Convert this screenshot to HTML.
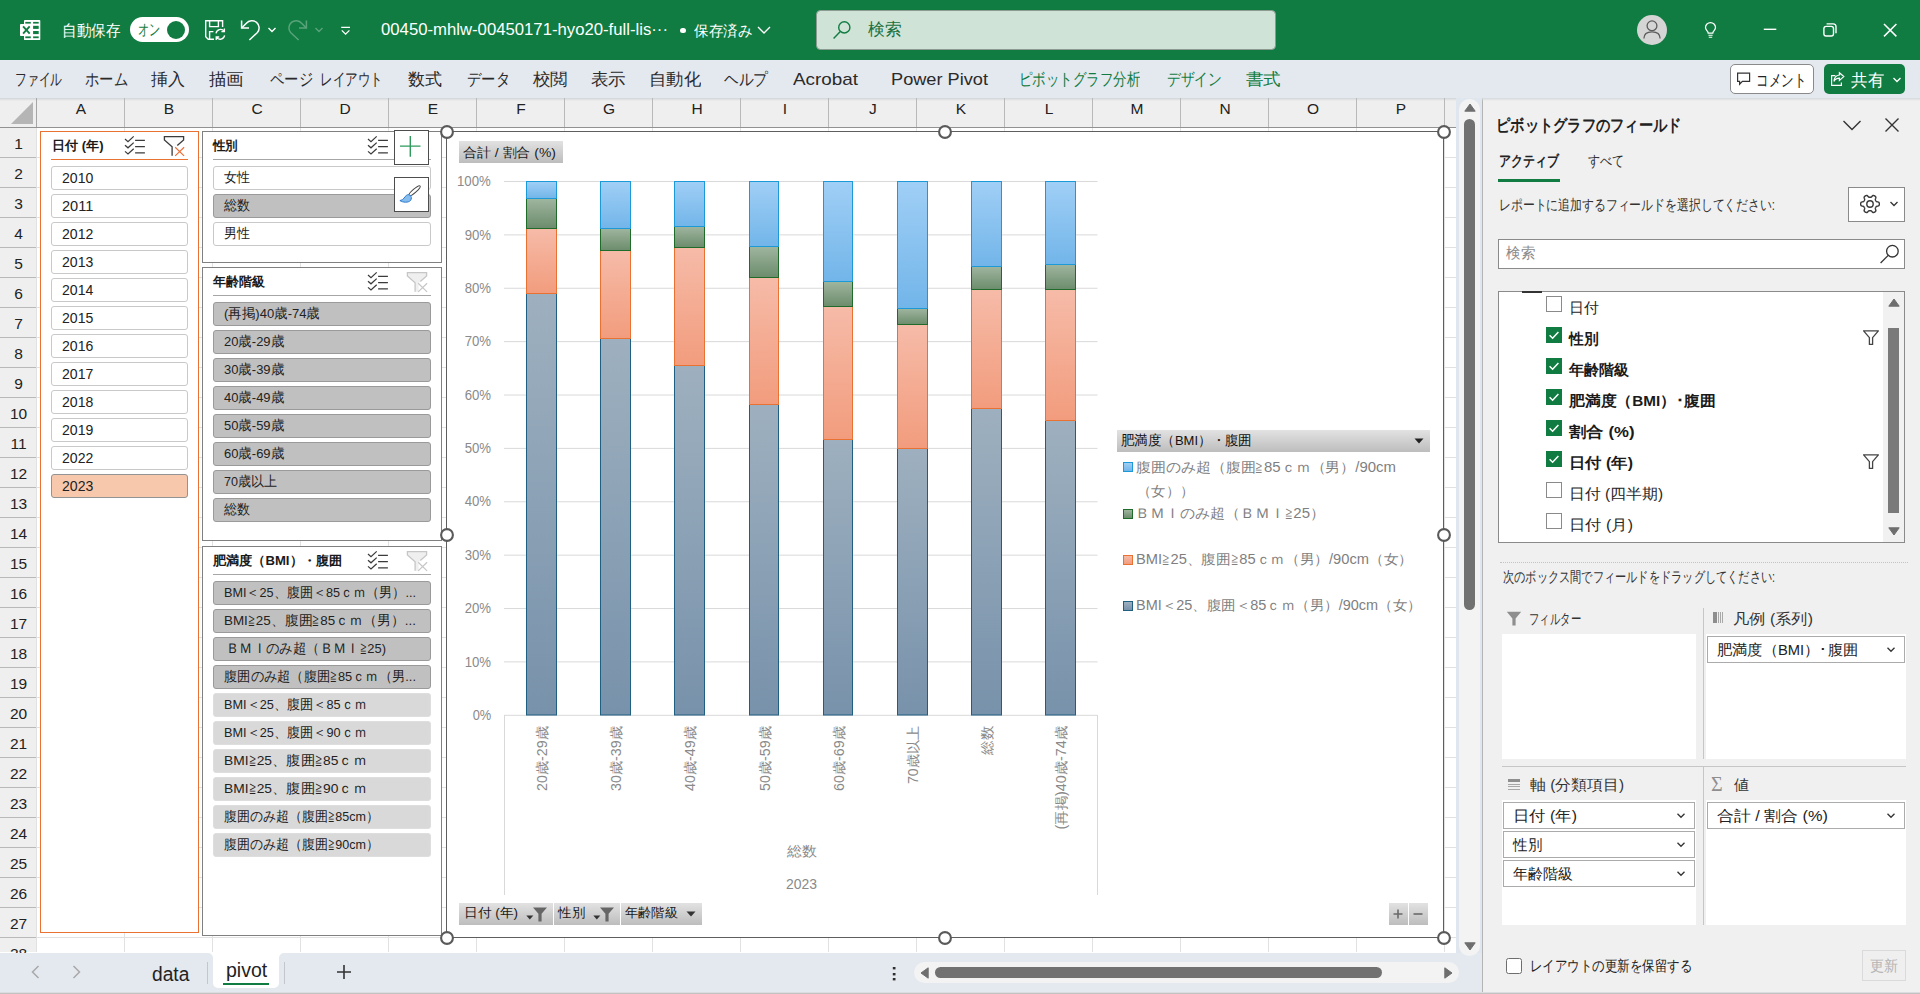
<!DOCTYPE html><html lang="ja"><head><meta charset="utf-8"><title>Excel</title><style>
*{box-sizing:border-box;margin:0;padding:0}
html,body{width:1920px;height:994px;overflow:hidden;background:#fff}
body{font-family:"Liberation Sans",sans-serif;font-size:14px;color:#222;position:relative}
div,svg{position:absolute}
.t{white-space:nowrap;line-height:1}
.ch{top:98px;height:29px;width:88px;border-right:1px solid #b9b9b9}
.rh{left:0;width:36px;height:30px;border-bottom:1px solid #b9b9b9}
.vg{top:128px;width:1px;height:824px;background:#e1e1e1}
.hg{left:37px;height:1px;width:1420px;background:#e1e1e1}
.slicer{background:#fff;border:1px solid #808080}
.ul{height:1px;background:#a6a6a6}
.si{height:24px;border:1px solid #c9c9c9;border-radius:3px;background:#fff}
.si.sel{background:#c0c0c0;border-color:#9a9a9a}
.si.dim{background:#d9d9d9;border-color:#dedede}
.si.or{background:#f7c8ac;border-color:#939393}
.fb{background:linear-gradient(#e2e2e2,#bdbdbd);}
.hdl{width:12px;height:12px;border-radius:50%;background:#fff;border:2px solid #595959}
.wbox{background:#fff}
.dd{background:#fff;border:1px solid #ababab;height:26px}
.cb{width:15px;height:15px;border:1px solid #8a8a8a;background:#fff}
.cbk{width:15px;height:15px;background:#107c41}
</style></head><body>
<div style="left:0;top:0;width:1920px;height:60px;background:#107c41"></div>
<svg style="left:18px;top:18px" width="24" height="24" viewBox="18 18 24 24"><rect x="24" y="19.9" width="16.3" height="20.2" rx="0.9" fill="#fff"/>
<g fill="#107c41"><rect x="33.1" y="21.9" width="5.6" height="1.7"/><rect x="33.1" y="25.8" width="5.6" height="3.1"/><rect x="33.1" y="31" width="5.6" height="3.1"/><rect x="33.1" y="36.4" width="5.6" height="1.8"/><rect x="25.3" y="21.9" width="5.5" height="1.7"/><rect x="25.3" y="36.4" width="5.5" height="1.8"/></g>
<rect x="20" y="24" width="11.6" height="12" rx="0.8" fill="#fff"/><path d="M23.1 26.3L29.7 33.7M29.7 26.3L23.1 33.7" stroke="#107c41" stroke-width="1.9"/></svg>
<div class="t" style="font-size:16px;color:#fff;left:62.30px;top:23.20px;transform:scaleX(0.9141);transform-origin:left center;">自動保存</div>
<div style="left:130px;top:17px;width:59px;height:25px;border-radius:12.5px;background:#fff"></div>
<div style="left:167px;top:21px;width:18px;height:18px;border-radius:50%;background:#107c41"></div>
<div class="t" style="font-size:15.5px;color:#107c41;left:137.60px;top:22.25px;transform:scaleX(0.6969);transform-origin:left center;">オン</div>
<svg style="left:204px;top:18px" width="24" height="24" viewBox="0 0 24 24" fill="none" stroke="#fff" stroke-width="1.4">
<path d="M10 21.3H4.2L1.7 18.8V2.7H18.6V9"/><path d="M5.6 2.7V8.6H14.4V2.7"/><path d="M5.6 21V13.6H9.4"/>
<path d="M12 15.3A4.6 4.6 0 0 1 20.2 13.2M20.4 10.6V13.6H17.4M20.6 17.3A4.6 4.6 0 0 1 12.4 19.4M12.2 22V19H15.2" stroke-width="1.3"/></svg>
<svg style="left:239px;top:18px" width="24" height="24" viewBox="0 0 24 24" fill="none" stroke="#fff" stroke-width="1.5">
<path d="M2.6 2.6V10H10"/><path d="M2.9 9.7L7.4 5.2A7.2 7.2 0 0 1 18.4 14.5L10.4 22"/></svg>
<svg style="left:266.6px;top:25.6px" width="10" height="8" viewBox="0 0 10 8" fill="none" stroke="#fff" stroke-width="1.4"><path d="M1.5 2L5 5.5L8.5 2"/></svg>
<svg style="left:285.4px;top:18px" width="24" height="24" viewBox="0 0 24 24" fill="none" stroke="#59a37c" stroke-width="1.5">
<path d="M21.4 2.6V10H14"/><path d="M21.1 9.7L16.6 5.2A7.2 7.2 0 0 0 5.6 14.5L13.6 22"/></svg>
<svg style="left:314.3px;top:25.6px" width="10" height="8" viewBox="0 0 10 8" fill="none" stroke="#59a37c" stroke-width="1.4"><path d="M1.5 2L5 5.5L8.5 2"/></svg>
<svg style="left:339px;top:24px" width="14" height="12" viewBox="0 0 14 12" fill="none" stroke="#fff" stroke-width="1.3"><path d="M2.2 3.3H11M2.8 6.4L6.6 10.2L10.4 6.4"/></svg>
<div class="t" style="font-size:16px;color:#fff;left:381.00px;top:22.00px;transform:scaleX(1.0444);transform-origin:left center;">00450-mhlw-00450171-hyo20-full-lis···</div>
<div style="left:680.3px;top:27.8px;width:5.4px;height:5.4px;border-radius:50%;background:#fff"></div>
<div class="t" style="font-size:15px;color:#fff;left:694.00px;top:22.50px;transform:scaleX(0.9667);transform-origin:left center;">保存済み</div>
<svg style="left:756px;top:25px" width="16" height="10" viewBox="0 0 16 10" fill="none" stroke="#fff" stroke-width="1.4"><path d="M2 2L8 8L14 2"/></svg>
<div style="left:816px;top:10px;width:460px;height:40px;background:#cfe3d7;border:1px solid #8c9a92;border-radius:4.5px"></div>
<svg style="left:832px;top:20px" width="20" height="20" viewBox="0 0 20 20" fill="none" stroke="#107c41" stroke-width="1.4"><circle cx="12.3" cy="7.4" r="5.6"/><path d="M8.3 11.4L1.6 18.4"/></svg>
<div class="t" style="font-size:16.5px;color:#17703e;left:868.00px;top:21.35px;transform:scaleX(0.9853);transform-origin:left center;">検索</div>
<div style="left:1637px;top:15px;width:30px;height:30px;border-radius:50%;background:#d5d5d5"></div>
<svg style="left:1641px;top:19px" width="22" height="22" viewBox="0 0 22 22" fill="none" stroke="#5c5c5c" stroke-width="1.3"><circle cx="11" cy="6.8" r="4.9"/><path d="M2.9 19.6C2.9 14.4 6.6 12.9 11 12.9S19.1 14.4 19.1 19.6"/></svg>
<svg style="left:1702px;top:21px" width="18" height="19" viewBox="0 0 18 19" fill="none" stroke="#fff" stroke-width="1.25"><path d="M6.2 12.2C6.2 9.9 3.5 9.2 3.5 6.6A5 5 0 0 1 13.5 6.6C13.5 9.2 10.8 9.9 10.8 12.2Z"/><path d="M6.4 14.2H10.6M6.8 16.2H10.2" stroke-width="1.1"/></svg>
<svg style="left:1762px;top:26px" width="16" height="6"><path d="M1.8 3.3H14.3" stroke="#fff" stroke-width="1.4"/></svg>
<svg style="left:1821px;top:21px" width="18" height="18" viewBox="0 0 18 18" fill="none" stroke="#fff" stroke-width="1.4"><rect x="2.9" y="5.4" width="9.6" height="9.6" rx="2.2"/><path d="M5.6 2.9H12.2A2.8 2.8 0 0 1 15 5.7V12.3"/></svg>
<svg style="left:1882px;top:22px" width="16" height="16" viewBox="0 0 16 16" fill="none" stroke="#fff" stroke-width="1.5"><path d="M2 2L14.4 14.4M14.4 2L2 14.4"/></svg>
<div style="left:0;top:60px;width:1920px;height:38px;background:#e4e8ef"></div>
<div class="t" style="font-size:17px;color:#2a2a2a;left:14.80px;top:70.80px;transform:scaleX(0.6912);transform-origin:left center;">ファイル</div>
<div class="t" style="font-size:17px;color:#2a2a2a;left:84.80px;top:70.80px;transform:scaleX(0.8431);transform-origin:left center;">ホーム</div>
<div class="t" style="font-size:17px;color:#2a2a2a;left:150.80px;top:70.80px;">挿入</div>
<div class="t" style="font-size:17px;color:#2a2a2a;left:208.80px;top:70.80px;transform:scaleX(1.0294);transform-origin:left center;">描画</div>
<div class="t" style="font-size:17px;color:#2a2a2a;left:269.80px;top:70.80px;transform:scaleX(0.8431);transform-origin:left center;">ページ</div>
<div class="t" style="font-size:17px;color:#2a2a2a;left:319.80px;top:70.80px;transform:scaleX(0.7353);transform-origin:left center;">レイアウト</div>
<div class="t" style="font-size:17px;color:#2a2a2a;left:407.80px;top:70.80px;">数式</div>
<div class="t" style="font-size:17px;color:#2a2a2a;left:466.80px;top:70.80px;transform:scaleX(0.8431);transform-origin:left center;">データ</div>
<div class="t" style="font-size:17px;color:#2a2a2a;left:532.80px;top:70.80px;transform:scaleX(1.0294);transform-origin:left center;">校閲</div>
<div class="t" style="font-size:17px;color:#2a2a2a;left:590.80px;top:70.80px;transform:scaleX(1.0294);transform-origin:left center;">表示</div>
<div class="t" style="font-size:17px;color:#2a2a2a;left:648.80px;top:70.80px;transform:scaleX(1.0196);transform-origin:left center;">自動化</div>
<div class="t" style="font-size:17px;color:#2a2a2a;left:723.80px;top:70.80px;transform:scaleX(0.8627);transform-origin:left center;">ヘルプ</div>
<div class="t" style="font-size:17px;color:#2a2a2a;left:793.00px;top:70.80px;transform:scaleX(1.1093);transform-origin:left center;">Acrobat</div>
<div class="t" style="font-size:17px;color:#2a2a2a;left:891.00px;top:70.80px;transform:scaleX(1.0694);transform-origin:left center;">Power Pivot</div>
<div class="t" style="font-size:17px;color:#107c41;left:1018.80px;top:70.80px;transform:scaleX(0.7908);transform-origin:left center;">ピボットグラフ分析</div>
<div class="t" style="font-size:17px;color:#107c41;left:1166.80px;top:70.80px;transform:scaleX(0.8088);transform-origin:left center;">デザイン</div>
<div class="t" style="font-size:17px;color:#107c41;left:1245.80px;top:70.80px;transform:scaleX(1.0294);transform-origin:left center;">書式</div>
<div style="left:1730px;top:64px;width:84px;height:30px;background:#fff;border:1px solid #8a8a8a;border-radius:5px"></div>
<svg style="left:1735.6px;top:70.8px" width="16" height="16" viewBox="0 0 16 16" fill="none" stroke="#333" stroke-width="1.2"><path d="M1.6 2.2H13.6V10.4H6.4L3.6 13.2V10.4H1.6Z"/></svg>
<div class="t" style="font-size:17px;color:#222;left:1755.50px;top:71.70px;transform:scaleX(0.7353);transform-origin:left center;">コメント</div>
<div style="left:1824px;top:64px;width:81px;height:30px;background:#107c41;border-radius:5px"></div>
<svg style="left:1828.6px;top:70.6px" width="17" height="17" viewBox="0 0 17 17" fill="none" stroke="#fff" stroke-width="1.2"><path d="M6.4 4.6H2.6V14.4H12.4V11.4"/><path d="M10.4 1.8L14.8 5.6L10.4 9.4V7.2C7.6 7.2 6 8.4 5 10.4C5.2 6.8 7 4.4 10.4 4V1.8Z"/></svg>
<div class="t" style="font-size:17px;color:#fff;left:1850.50px;top:71.50px;transform:scaleX(0.9706);transform-origin:left center;">共有</div>
<svg style="left:1891.6px;top:76px" width="10" height="8" viewBox="0 0 10 8" fill="none" stroke="#fff" stroke-width="1.3"><path d="M1.5 2L5 5.5L8.5 2"/></svg>
<div style="left:0;top:98px;width:1457px;height:30px;background:#efefef;border-bottom:1px solid #929292"></div>
<div style="left:0;top:98px;width:1920px;height:3px;background:linear-gradient(#d2d4d8,rgba(226,226,226,0))"></div>
<div style="left:0;top:128px;width:37px;height:824px;background:#efefef;border-right:1px solid #a6a6a6"></div>
<div class="vg" style="left:36px"></div>
<div class="vg" style="left:124px"></div>
<div class="vg" style="left:212px"></div>
<div class="vg" style="left:300px"></div>
<div class="vg" style="left:388px"></div>
<div class="vg" style="left:476px"></div>
<div class="vg" style="left:564px"></div>
<div class="vg" style="left:652px"></div>
<div class="vg" style="left:740px"></div>
<div class="vg" style="left:828px"></div>
<div class="vg" style="left:916px"></div>
<div class="vg" style="left:1004px"></div>
<div class="vg" style="left:1092px"></div>
<div class="vg" style="left:1180px"></div>
<div class="vg" style="left:1268px"></div>
<div class="vg" style="left:1356px"></div>
<div class="vg" style="left:1444px"></div>
<div class="hg" style="top:157px"></div>
<div class="hg" style="top:187px"></div>
<div class="hg" style="top:217px"></div>
<div class="hg" style="top:247px"></div>
<div class="hg" style="top:277px"></div>
<div class="hg" style="top:307px"></div>
<div class="hg" style="top:337px"></div>
<div class="hg" style="top:367px"></div>
<div class="hg" style="top:397px"></div>
<div class="hg" style="top:427px"></div>
<div class="hg" style="top:457px"></div>
<div class="hg" style="top:487px"></div>
<div class="hg" style="top:517px"></div>
<div class="hg" style="top:547px"></div>
<div class="hg" style="top:577px"></div>
<div class="hg" style="top:607px"></div>
<div class="hg" style="top:637px"></div>
<div class="hg" style="top:667px"></div>
<div class="hg" style="top:697px"></div>
<div class="hg" style="top:727px"></div>
<div class="hg" style="top:757px"></div>
<div class="hg" style="top:787px"></div>
<div class="hg" style="top:817px"></div>
<div class="hg" style="top:847px"></div>
<div class="hg" style="top:877px"></div>
<div class="hg" style="top:907px"></div>
<div class="hg" style="top:937px"></div>
<div class="hg" style="top:967px"></div>
<div class="ch" style="left:37px"></div>
<div class="t" style="font-size:15.5px;color:#222;left:75.83px;top:101.25px;">A</div>
<div class="ch" style="left:125px"></div>
<div class="t" style="font-size:15.5px;color:#222;left:163.83px;top:101.25px;">B</div>
<div class="ch" style="left:213px"></div>
<div class="t" style="font-size:15.5px;color:#222;left:251.40px;top:101.25px;">C</div>
<div class="ch" style="left:301px"></div>
<div class="t" style="font-size:15.5px;color:#222;left:339.40px;top:101.25px;">D</div>
<div class="ch" style="left:389px"></div>
<div class="t" style="font-size:15.5px;color:#222;left:427.83px;top:101.25px;">E</div>
<div class="ch" style="left:477px"></div>
<div class="t" style="font-size:15.5px;color:#222;left:516.27px;top:101.25px;">F</div>
<div class="ch" style="left:565px"></div>
<div class="t" style="font-size:15.5px;color:#222;left:602.97px;top:101.25px;">G</div>
<div class="ch" style="left:653px"></div>
<div class="t" style="font-size:15.5px;color:#222;left:691.40px;top:101.25px;">H</div>
<div class="ch" style="left:741px"></div>
<div class="t" style="font-size:15.5px;color:#222;left:782.84px;top:101.25px;">I</div>
<div class="ch" style="left:829px"></div>
<div class="t" style="font-size:15.5px;color:#222;left:869.12px;top:101.25px;">J</div>
<div class="ch" style="left:917px"></div>
<div class="t" style="font-size:15.5px;color:#222;left:955.83px;top:101.25px;">K</div>
<div class="ch" style="left:1005px"></div>
<div class="t" style="font-size:15.5px;color:#222;left:1044.69px;top:101.25px;">L</div>
<div class="ch" style="left:1093px"></div>
<div class="t" style="font-size:15.5px;color:#222;left:1130.54px;top:101.25px;">M</div>
<div class="ch" style="left:1181px"></div>
<div class="t" style="font-size:15.5px;color:#222;left:1219.40px;top:101.25px;">N</div>
<div class="ch" style="left:1269px"></div>
<div class="t" style="font-size:15.5px;color:#222;left:1306.97px;top:101.25px;">O</div>
<div class="ch" style="left:1357px"></div>
<div class="t" style="font-size:15.5px;color:#222;left:1395.83px;top:101.25px;">P</div>
<div style="left:0;top:98px;width:37px;height:29px;border-right:1px solid #a6a6a6"></div>
<svg style="left:11px;top:102px" width="23" height="23"><path d="M22 0V22H0Z" fill="#b5b5b5"/></svg>
<div class="rh" style="top:128px"></div>
<div class="t" style="font-size:15.5px;color:#222;left:14.29px;top:135.55px;">1</div>
<div class="rh" style="top:158px"></div>
<div class="t" style="font-size:15.5px;color:#222;left:14.29px;top:165.55px;">2</div>
<div class="rh" style="top:188px"></div>
<div class="t" style="font-size:15.5px;color:#222;left:14.29px;top:195.55px;">3</div>
<div class="rh" style="top:218px"></div>
<div class="t" style="font-size:15.5px;color:#222;left:14.29px;top:225.55px;">4</div>
<div class="rh" style="top:248px"></div>
<div class="t" style="font-size:15.5px;color:#222;left:14.29px;top:255.55px;">5</div>
<div class="rh" style="top:278px"></div>
<div class="t" style="font-size:15.5px;color:#222;left:14.29px;top:285.55px;">6</div>
<div class="rh" style="top:308px"></div>
<div class="t" style="font-size:15.5px;color:#222;left:14.29px;top:315.55px;">7</div>
<div class="rh" style="top:338px"></div>
<div class="t" style="font-size:15.5px;color:#222;left:14.29px;top:345.55px;">8</div>
<div class="rh" style="top:368px"></div>
<div class="t" style="font-size:15.5px;color:#222;left:14.29px;top:375.55px;">9</div>
<div class="rh" style="top:398px"></div>
<div class="t" style="font-size:15.5px;color:#222;left:9.98px;top:405.55px;">10</div>
<div class="rh" style="top:428px"></div>
<div class="t" style="font-size:15.5px;color:#222;left:10.55px;top:435.55px;">11</div>
<div class="rh" style="top:458px"></div>
<div class="t" style="font-size:15.5px;color:#222;left:9.98px;top:465.55px;">12</div>
<div class="rh" style="top:488px"></div>
<div class="t" style="font-size:15.5px;color:#222;left:9.98px;top:495.55px;">13</div>
<div class="rh" style="top:518px"></div>
<div class="t" style="font-size:15.5px;color:#222;left:9.98px;top:525.55px;">14</div>
<div class="rh" style="top:548px"></div>
<div class="t" style="font-size:15.5px;color:#222;left:9.98px;top:555.55px;">15</div>
<div class="rh" style="top:578px"></div>
<div class="t" style="font-size:15.5px;color:#222;left:9.98px;top:585.55px;">16</div>
<div class="rh" style="top:608px"></div>
<div class="t" style="font-size:15.5px;color:#222;left:9.98px;top:615.55px;">17</div>
<div class="rh" style="top:638px"></div>
<div class="t" style="font-size:15.5px;color:#222;left:9.98px;top:645.55px;">18</div>
<div class="rh" style="top:668px"></div>
<div class="t" style="font-size:15.5px;color:#222;left:9.98px;top:675.55px;">19</div>
<div class="rh" style="top:698px"></div>
<div class="t" style="font-size:15.5px;color:#222;left:9.98px;top:705.55px;">20</div>
<div class="rh" style="top:728px"></div>
<div class="t" style="font-size:15.5px;color:#222;left:9.98px;top:735.55px;">21</div>
<div class="rh" style="top:758px"></div>
<div class="t" style="font-size:15.5px;color:#222;left:9.98px;top:765.55px;">22</div>
<div class="rh" style="top:788px"></div>
<div class="t" style="font-size:15.5px;color:#222;left:9.98px;top:795.55px;">23</div>
<div class="rh" style="top:818px"></div>
<div class="t" style="font-size:15.5px;color:#222;left:9.98px;top:825.55px;">24</div>
<div class="rh" style="top:848px"></div>
<div class="t" style="font-size:15.5px;color:#222;left:9.98px;top:855.55px;">25</div>
<div class="rh" style="top:878px"></div>
<div class="t" style="font-size:15.5px;color:#222;left:9.98px;top:885.55px;">26</div>
<div class="rh" style="top:908px"></div>
<div class="t" style="font-size:15.5px;color:#222;left:9.98px;top:915.55px;">27</div>
<div class="rh" style="top:938px"></div>
<div class="t" style="font-size:15.5px;color:#222;left:9.98px;top:945.55px;">28</div>
<div class="slicer" style="left:40px;top:131px;width:159px;height:802px;border-color:#e97132"></div>
<div class="t" style="font-size:13px;color:#1a1a1a;font-weight:bold;left:52.00px;top:138.70px;transform:scaleX(1.0043);transform-origin:left center;">日付 (年)</div>
<svg style="left:124px;top:135px" width="22" height="21" viewBox="0 0 22 21" fill="none" stroke="#3b3b3b" stroke-width="1.25"><path d="M1 4L4 6.6L9.7 1.4M1 10.2L4 12.8L9.7 7.6M1 16.4L4 19L9.7 13.8"/><path d="M11.1 5.3H20.9M11.1 11.6H20.9M11.1 17.8H20.9" stroke-width="1.3"/></svg>
<svg style="left:162px;top:135px" width="24" height="22" viewBox="0 0 24 22" fill="none" stroke="#3b3b3b" stroke-width="1.3"><path d="M10.1 20.7V11.75L2.4 4.95V1.7H21.6V4.95L15.3 10.6L13.6 12.2V20.7" fill="#fbfbfb" stroke="none"/><path d="M10.1 20.7V11.75L2.4 4.95V1.7H21.6V4.95L15.3 10.6"/><path d="M13.2 12.2L22.1 20.9M22.1 12.2L13.2 20.9" stroke="#e8703a" stroke-width="1.2"/></svg>
<div class="ul" style="left:51px;top:159px;width:137px;background:#e97132"></div>
<div class="si" style="left:51px;top:166px;width:137px"></div>
<div class="t" style="font-size:14px;color:#222;left:62.30px;top:170.60px;transform:scaleX(1.0046);transform-origin:left center;">2010</div>
<div class="si" style="left:51px;top:194px;width:137px"></div>
<div class="t" style="font-size:14px;color:#222;left:62.30px;top:198.60px;transform:scaleX(1.0395);transform-origin:left center;">2011</div>
<div class="si" style="left:51px;top:222px;width:137px"></div>
<div class="t" style="font-size:14px;color:#222;left:62.30px;top:226.60px;transform:scaleX(1.0046);transform-origin:left center;">2012</div>
<div class="si" style="left:51px;top:250px;width:137px"></div>
<div class="t" style="font-size:14px;color:#222;left:62.30px;top:254.60px;transform:scaleX(1.0046);transform-origin:left center;">2013</div>
<div class="si" style="left:51px;top:278px;width:137px"></div>
<div class="t" style="font-size:14px;color:#222;left:62.30px;top:282.60px;transform:scaleX(1.0046);transform-origin:left center;">2014</div>
<div class="si" style="left:51px;top:306px;width:137px"></div>
<div class="t" style="font-size:14px;color:#222;left:62.30px;top:310.60px;transform:scaleX(1.0046);transform-origin:left center;">2015</div>
<div class="si" style="left:51px;top:334px;width:137px"></div>
<div class="t" style="font-size:14px;color:#222;left:62.30px;top:338.60px;transform:scaleX(1.0046);transform-origin:left center;">2016</div>
<div class="si" style="left:51px;top:362px;width:137px"></div>
<div class="t" style="font-size:14px;color:#222;left:62.30px;top:366.60px;transform:scaleX(1.0046);transform-origin:left center;">2017</div>
<div class="si" style="left:51px;top:390px;width:137px"></div>
<div class="t" style="font-size:14px;color:#222;left:62.30px;top:394.60px;transform:scaleX(1.0046);transform-origin:left center;">2018</div>
<div class="si" style="left:51px;top:418px;width:137px"></div>
<div class="t" style="font-size:14px;color:#222;left:62.30px;top:422.60px;transform:scaleX(1.0046);transform-origin:left center;">2019</div>
<div class="si" style="left:51px;top:446px;width:137px"></div>
<div class="t" style="font-size:14px;color:#222;left:62.30px;top:450.60px;transform:scaleX(1.0046);transform-origin:left center;">2022</div>
<div class="si or" style="left:51px;top:474px;width:137px"></div>
<div class="t" style="font-size:14px;color:#222;left:62.30px;top:478.60px;transform:scaleX(1.0046);transform-origin:left center;">2023</div>
<div class="slicer" style="left:202px;top:131px;width:240px;height:132px"></div>
<div class="t" style="font-size:13px;color:#1a1a1a;font-weight:bold;left:213.00px;top:138.70px;transform:scaleX(0.9615);transform-origin:left center;">性別</div>
<svg style="left:367px;top:135px" width="22" height="21" viewBox="0 0 22 21" fill="none" stroke="#3b3b3b" stroke-width="1.25"><path d="M1 4L4 6.6L9.7 1.4M1 10.2L4 12.8L9.7 7.6M1 16.4L4 19L9.7 13.8"/><path d="M11.1 5.3H20.9M11.1 11.6H20.9M11.1 17.8H20.9" stroke-width="1.3"/></svg>
<div class="ul" style="left:213px;top:159px;width:218px"></div>
<div class="si" style="left:213px;top:166px;width:218px"></div>
<div class="t" style="font-size:13.5px;color:#222;left:224.00px;top:171.25px;transform:scaleX(0.9286);transform-origin:left center;">女性</div>
<div class="si sel" style="left:213px;top:194px;width:218px"></div>
<div class="t" style="font-size:13.5px;color:#222;left:224.00px;top:199.25px;transform:scaleX(0.9286);transform-origin:left center;">総数</div>
<div class="si" style="left:213px;top:222px;width:218px"></div>
<div class="t" style="font-size:13.5px;color:#222;left:224.00px;top:227.25px;transform:scaleX(0.9286);transform-origin:left center;">男性</div>
<div class="slicer" style="left:202px;top:267px;width:240px;height:274px"></div>
<div class="t" style="font-size:13px;color:#1a1a1a;font-weight:bold;left:213.00px;top:274.70px;">年齢階級</div>
<svg style="left:367px;top:271px" width="22" height="21" viewBox="0 0 22 21" fill="none" stroke="#3b3b3b" stroke-width="1.25"><path d="M1 4L4 6.6L9.7 1.4M1 10.2L4 12.8L9.7 7.6M1 16.4L4 19L9.7 13.8"/><path d="M11.1 5.3H20.9M11.1 11.6H20.9M11.1 17.8H20.9" stroke-width="1.3"/></svg>
<svg style="left:404.6px;top:271px" width="24" height="22" viewBox="0 0 24 22" fill="none" stroke="#c6c6c6" stroke-width="1.3"><path d="M10.1 20.7V11.75L2.4 4.95V1.7H21.6V4.95L15.3 10.6L13.6 12.2V20.7" fill="#efefef" stroke="none"/><path d="M10.1 20.7V11.75L2.4 4.95V1.7H21.6V4.95L15.3 10.6"/><path d="M13.2 12.2L22.1 20.9M22.1 12.2L13.2 20.9" stroke="#c6c6c6" stroke-width="1.2"/></svg>
<div class="ul" style="left:213px;top:295px;width:218px"></div>
<div class="si sel" style="left:213px;top:302px;width:218px"></div>
<div class="t" style="font-size:13.5px;color:#222;left:224.00px;top:306.75px;transform:scaleX(0.9645);transform-origin:left center;">(再掲)40歳-74歳</div>
<div class="si sel" style="left:213px;top:330px;width:218px"></div>
<div class="t" style="font-size:13.5px;color:#222;left:224.00px;top:334.75px;transform:scaleX(0.9595);transform-origin:left center;">20歳-29歳</div>
<div class="si sel" style="left:213px;top:358px;width:218px"></div>
<div class="t" style="font-size:13.5px;color:#222;left:224.00px;top:362.75px;transform:scaleX(0.9595);transform-origin:left center;">30歳-39歳</div>
<div class="si sel" style="left:213px;top:386px;width:218px"></div>
<div class="t" style="font-size:13.5px;color:#222;left:224.00px;top:390.75px;transform:scaleX(0.9595);transform-origin:left center;">40歳-49歳</div>
<div class="si sel" style="left:213px;top:414px;width:218px"></div>
<div class="t" style="font-size:13.5px;color:#222;left:224.00px;top:418.75px;transform:scaleX(0.9595);transform-origin:left center;">50歳-59歳</div>
<div class="si sel" style="left:213px;top:442px;width:218px"></div>
<div class="t" style="font-size:13.5px;color:#222;left:224.00px;top:446.75px;transform:scaleX(0.9595);transform-origin:left center;">60歳-69歳</div>
<div class="si sel" style="left:213px;top:470px;width:218px"></div>
<div class="t" style="font-size:13.5px;color:#222;left:224.00px;top:474.75px;transform:scaleX(0.9293);transform-origin:left center;">70歳以上</div>
<div class="si sel" style="left:213px;top:498px;width:218px"></div>
<div class="t" style="font-size:13.5px;color:#222;left:224.00px;top:502.75px;transform:scaleX(0.9286);transform-origin:left center;">総数</div>
<div class="slicer" style="left:202px;top:546px;width:240px;height:390px"></div>
<div class="t" style="font-size:13px;color:#1a1a1a;font-weight:bold;left:213.00px;top:553.70px;transform:scaleX(1.0090);transform-origin:left center;">肥満度（BMI）・腹囲</div>
<svg style="left:367px;top:550px" width="22" height="21" viewBox="0 0 22 21" fill="none" stroke="#3b3b3b" stroke-width="1.25"><path d="M1 4L4 6.6L9.7 1.4M1 10.2L4 12.8L9.7 7.6M1 16.4L4 19L9.7 13.8"/><path d="M11.1 5.3H20.9M11.1 11.6H20.9M11.1 17.8H20.9" stroke-width="1.3"/></svg>
<svg style="left:404.6px;top:550px" width="24" height="22" viewBox="0 0 24 22" fill="none" stroke="#c6c6c6" stroke-width="1.3"><path d="M10.1 20.7V11.75L2.4 4.95V1.7H21.6V4.95L15.3 10.6L13.6 12.2V20.7" fill="#efefef" stroke="none"/><path d="M10.1 20.7V11.75L2.4 4.95V1.7H21.6V4.95L15.3 10.6"/><path d="M13.2 12.2L22.1 20.9M22.1 12.2L13.2 20.9" stroke="#c6c6c6" stroke-width="1.2"/></svg>
<div class="ul" style="left:213px;top:574px;width:218px"></div>
<div class="si sel" style="left:213px;top:581px;width:218px"></div>
<div class="t" style="font-size:13.5px;color:#222;left:224.00px;top:585.75px;transform:scaleX(0.9352);transform-origin:left center;">BMI＜25、腹囲＜85ｃｍ（男）...</div>
<div class="si sel" style="left:213px;top:609px;width:218px"></div>
<div class="t" style="font-size:13.5px;color:#222;left:224.00px;top:613.75px;transform:scaleX(0.9933);transform-origin:left center;">BMI≧25、腹囲≧85ｃｍ（男）...</div>
<div class="si sel" style="left:213px;top:637px;width:218px"></div>
<div class="t" style="font-size:13.5px;color:#222;left:226.00px;top:641.75px;transform:scaleX(0.9551);transform-origin:left center;">ＢＭＩのみ超（ＢＭＩ≧25)</div>
<div class="si sel" style="left:213px;top:665px;width:218px"></div>
<div class="t" style="font-size:13.5px;color:#222;left:224.00px;top:669.75px;transform:scaleX(0.9492);transform-origin:left center;">腹囲のみ超（腹囲≧85ｃｍ（男...</div>
<div class="si dim" style="left:213px;top:693px;width:218px"></div>
<div class="t" style="font-size:13.5px;color:#222;left:224.00px;top:697.75px;transform:scaleX(0.9405);transform-origin:left center;">BMI＜25、腹囲＜85ｃｍ</div>
<div class="si dim" style="left:213px;top:721px;width:218px"></div>
<div class="t" style="font-size:13.5px;color:#222;left:224.00px;top:725.75px;transform:scaleX(0.9405);transform-origin:left center;">BMI＜25、腹囲＜90ｃｍ</div>
<div class="si dim" style="left:213px;top:749px;width:218px"></div>
<div class="t" style="font-size:13.5px;color:#222;left:224.00px;top:753.75px;transform:scaleX(1.0211);transform-origin:left center;">BMI≧25、腹囲≧85ｃｍ</div>
<div class="si dim" style="left:213px;top:777px;width:218px"></div>
<div class="t" style="font-size:13.5px;color:#222;left:224.00px;top:781.75px;transform:scaleX(1.0211);transform-origin:left center;">BMI≧25、腹囲≧90ｃｍ</div>
<div class="si dim" style="left:213px;top:805px;width:218px"></div>
<div class="t" style="font-size:13.5px;color:#222;left:224.00px;top:809.75px;transform:scaleX(0.9281);transform-origin:left center;">腹囲のみ超（腹囲≧85cm）</div>
<div class="si dim" style="left:213px;top:833px;width:218px"></div>
<div class="t" style="font-size:13.5px;color:#222;left:224.00px;top:837.75px;transform:scaleX(0.9281);transform-origin:left center;">腹囲のみ超（腹囲≧90cm）</div>
<div style="left:394px;top:130px;width:35px;height:35px;background:#fff;border:1px solid #4d4d4d"></div>
<svg style="left:394px;top:130px" width="35" height="35" fill="none" stroke="#2f9a5c" stroke-width="1.4"><path d="M16.3 6V26.8M6 16.1H26.5"/></svg>
<div style="left:394px;top:177px;width:35px;height:35px;background:#fff;border:1px solid #4d4d4d"></div>
<svg style="left:394px;top:177px" width="35" height="35" viewBox="0 0 35 35"><ellipse cx="20.6" cy="13.8" rx="7.3" ry="1.75" transform="rotate(-41 20.6 13.8)" fill="#fff" stroke="#444" stroke-width="1"/><path d="M15.8 18C17.5 19.5 18 21.5 16.5 23.5C14 26 9 25.5 5.9 23.6C10 23 10.5 19.5 12.5 18.3C13.5 17.6 15 17.4 15.8 18Z" fill="#86bdee" stroke="#2b7bd0" stroke-width="1"/></svg>
<div style="left:446px;top:131px;width:998px;height:807px;background:#fff;border:1px solid #5e5e5e"></div>
<div class="fb" style="left:459px;top:141px;width:104px;height:22px"></div>
<div class="t" style="font-size:13px;color:#1a1a1a;left:463.00px;top:145.50px;transform:scaleX(1.0730);transform-origin:left center;">合計 / 割合 (%)</div>
<svg style="left:500px;top:170px" width="600" height="550" viewBox="500 170 600 550" stroke="#d9d9d9" stroke-width="1"><path d="M504 715.30H1097.5"/><path d="M504 661.92H1097.5"/><path d="M504 608.54H1097.5"/><path d="M504 555.16H1097.5"/><path d="M504 501.78H1097.5"/><path d="M504 448.40H1097.5"/><path d="M504 395.02H1097.5"/><path d="M504 341.64H1097.5"/><path d="M504 288.26H1097.5"/><path d="M504 234.88H1097.5"/><path d="M504 181.50H1097.5"/></svg>
<div class="t" style="font-size:14px;color:#8a8a8a;left:470.77px;top:708.00px;transform:scaleX(0.9192);transform-origin:right center;">0%</div>
<div class="t" style="font-size:14px;color:#8a8a8a;left:462.97px;top:654.62px;transform:scaleX(0.9418);transform-origin:right center;">10%</div>
<div class="t" style="font-size:14px;color:#8a8a8a;left:462.97px;top:601.24px;transform:scaleX(0.9418);transform-origin:right center;">20%</div>
<div class="t" style="font-size:14px;color:#8a8a8a;left:462.97px;top:547.86px;transform:scaleX(0.9418);transform-origin:right center;">30%</div>
<div class="t" style="font-size:14px;color:#8a8a8a;left:462.97px;top:494.48px;transform:scaleX(0.9418);transform-origin:right center;">40%</div>
<div class="t" style="font-size:14px;color:#8a8a8a;left:462.97px;top:441.10px;transform:scaleX(0.9418);transform-origin:right center;">50%</div>
<div class="t" style="font-size:14px;color:#8a8a8a;left:462.97px;top:387.72px;transform:scaleX(0.9418);transform-origin:right center;">60%</div>
<div class="t" style="font-size:14px;color:#8a8a8a;left:462.97px;top:334.34px;transform:scaleX(0.9418);transform-origin:right center;">70%</div>
<div class="t" style="font-size:14px;color:#8a8a8a;left:462.97px;top:280.96px;transform:scaleX(0.9418);transform-origin:right center;">80%</div>
<div class="t" style="font-size:14px;color:#8a8a8a;left:462.97px;top:227.58px;transform:scaleX(0.9418);transform-origin:right center;">90%</div>
<div class="t" style="font-size:14px;color:#8a8a8a;left:455.19px;top:174.20px;transform:scaleX(0.9438);transform-origin:right center;">100%</div>
<div style="left:504px;top:715px;width:1px;height:180px;background:#d9d9d9"></div>
<div style="left:1097px;top:715px;width:1px;height:180px;background:#d9d9d9"></div>
<svg style="left:500px;top:170px" width="600" height="550" viewBox="500 170 600 550"><defs><linearGradient id="g0" x1="0" y1="0" x2="0" y2="1"><stop offset="0" stop-color="#a0cff6"/><stop offset="1" stop-color="#72b5e9"/></linearGradient><linearGradient id="g1" x1="0" y1="0" x2="0" y2="1"><stop offset="0" stop-color="#9fb59f"/><stop offset="1" stop-color="#6c8c6c"/></linearGradient><linearGradient id="g2" x1="0" y1="0" x2="0" y2="1"><stop offset="0" stop-color="#f6bba8"/><stop offset="1" stop-color="#f29c7d"/></linearGradient><linearGradient id="g3" x1="0" y1="0" x2="0" y2="1"><stop offset="0" stop-color="#9eb0bf"/><stop offset="1" stop-color="#7892ab"/></linearGradient></defs><rect x="526.5" y="293.5" width="30.0" height="421.5" fill="url(#g3)" stroke="#1f5f82" stroke-width="1"/><rect x="526.5" y="228.5" width="30.0" height="65.0" fill="url(#g2)" stroke="#e97132" stroke-width="1"/><rect x="526.5" y="198.5" width="30.0" height="30.0" fill="url(#g1)" stroke="#1e6b2a" stroke-width="1"/><rect x="526.5" y="181.5" width="30.0" height="17.0" fill="url(#g0)" stroke="#1c9ad8" stroke-width="1"/><rect x="600.5" y="338.5" width="30.0" height="376.5" fill="url(#g3)" stroke="#1f5f82" stroke-width="1"/><rect x="600.5" y="250.5" width="30.0" height="88.0" fill="url(#g2)" stroke="#e97132" stroke-width="1"/><rect x="600.5" y="228.5" width="30.0" height="22.0" fill="url(#g1)" stroke="#1e6b2a" stroke-width="1"/><rect x="600.5" y="181.5" width="30.0" height="47.0" fill="url(#g0)" stroke="#1c9ad8" stroke-width="1"/><rect x="674.5" y="365.5" width="30.0" height="349.5" fill="url(#g3)" stroke="#1f5f82" stroke-width="1"/><rect x="674.5" y="247.5" width="30.0" height="118.0" fill="url(#g2)" stroke="#e97132" stroke-width="1"/><rect x="674.5" y="226.5" width="30.0" height="21.0" fill="url(#g1)" stroke="#1e6b2a" stroke-width="1"/><rect x="674.5" y="181.5" width="30.0" height="45.0" fill="url(#g0)" stroke="#1c9ad8" stroke-width="1"/><rect x="749.5" y="404.5" width="29.0" height="310.5" fill="url(#g3)" stroke="#1f5f82" stroke-width="1"/><rect x="749.5" y="277.5" width="29.0" height="127.0" fill="url(#g2)" stroke="#e97132" stroke-width="1"/><rect x="749.5" y="246.5" width="29.0" height="31.0" fill="url(#g1)" stroke="#1e6b2a" stroke-width="1"/><rect x="749.5" y="181.5" width="29.0" height="65.0" fill="url(#g0)" stroke="#1c9ad8" stroke-width="1"/><rect x="823.5" y="439.5" width="29.0" height="275.5" fill="url(#g3)" stroke="#1f5f82" stroke-width="1"/><rect x="823.5" y="306.5" width="29.0" height="133.0" fill="url(#g2)" stroke="#e97132" stroke-width="1"/><rect x="823.5" y="281.5" width="29.0" height="25.0" fill="url(#g1)" stroke="#1e6b2a" stroke-width="1"/><rect x="823.5" y="181.5" width="29.0" height="100.0" fill="url(#g0)" stroke="#1c9ad8" stroke-width="1"/><rect x="897.5" y="448.5" width="30.0" height="266.5" fill="url(#g3)" stroke="#1f5f82" stroke-width="1"/><rect x="897.5" y="324.5" width="30.0" height="124.0" fill="url(#g2)" stroke="#e97132" stroke-width="1"/><rect x="897.5" y="308.5" width="30.0" height="16.0" fill="url(#g1)" stroke="#1e6b2a" stroke-width="1"/><rect x="897.5" y="181.5" width="30.0" height="127.0" fill="url(#g0)" stroke="#1c9ad8" stroke-width="1"/><rect x="971.5" y="408.5" width="30.0" height="306.5" fill="url(#g3)" stroke="#1f5f82" stroke-width="1"/><rect x="971.5" y="289.5" width="30.0" height="119.0" fill="url(#g2)" stroke="#e97132" stroke-width="1"/><rect x="971.5" y="266.5" width="30.0" height="23.0" fill="url(#g1)" stroke="#1e6b2a" stroke-width="1"/><rect x="971.5" y="181.5" width="30.0" height="85.0" fill="url(#g0)" stroke="#1c9ad8" stroke-width="1"/><rect x="1045.5" y="420.5" width="30.0" height="294.5" fill="url(#g3)" stroke="#1f5f82" stroke-width="1"/><rect x="1045.5" y="289.5" width="30.0" height="131.0" fill="url(#g2)" stroke="#e97132" stroke-width="1"/><rect x="1045.5" y="264.5" width="30.0" height="25.0" fill="url(#g1)" stroke="#1e6b2a" stroke-width="1"/><rect x="1045.5" y="181.5" width="30.0" height="83.0" fill="url(#g0)" stroke="#1c9ad8" stroke-width="1"/></svg>
<div class="t" style="font-size:14px;color:#8a8a8a;left:478.09px;top:718.50px;transform:rotate(-90deg) scaleX(1.0186);transform-origin:right center;">20歳-29歳</div>
<div class="t" style="font-size:14px;color:#8a8a8a;left:552.09px;top:718.50px;transform:rotate(-90deg) scaleX(1.0186);transform-origin:right center;">30歳-39歳</div>
<div class="t" style="font-size:14px;color:#8a8a8a;left:626.09px;top:718.50px;transform:rotate(-90deg) scaleX(1.0186);transform-origin:right center;">40歳-49歳</div>
<div class="t" style="font-size:14px;color:#8a8a8a;left:700.59px;top:718.50px;transform:rotate(-90deg) scaleX(1.0186);transform-origin:right center;">50歳-59歳</div>
<div class="t" style="font-size:14px;color:#8a8a8a;left:774.59px;top:718.50px;transform:rotate(-90deg) scaleX(1.0186);transform-origin:right center;">60歳-69歳</div>
<div class="t" style="font-size:14px;color:#8a8a8a;left:855.32px;top:718.50px;transform:rotate(-90deg) scaleX(1.0073);transform-origin:right center;">70歳以上</div>
<div class="t" style="font-size:14px;color:#8a8a8a;left:958.90px;top:718.50px;transform:rotate(-90deg) scaleX(1.0357);transform-origin:right center;">総数</div>
<div class="t" style="font-size:14px;color:#8a8a8a;left:959.76px;top:718.50px;transform:rotate(-90deg) scaleX(1.0233);transform-origin:right center;">(再掲)40歳-74歳</div>
<div class="t" style="font-size:14px;color:#8a8a8a;left:787.80px;top:843.50px;transform:scaleX(1.0714);transform-origin:center center;">総数</div>
<div class="t" style="font-size:14px;color:#8a8a8a;left:785.62px;top:876.60px;transform:scaleX(0.9950);transform-origin:center center;">2023</div>
<div class="fb" style="left:459px;top:903px;width:94px;height:22px"></div>
<div class="t" style="font-size:12.8px;color:#1a1a1a;left:464.00px;top:906.90px;transform:scaleX(1.0569);transform-origin:left center;">日付 (年)</div>
<svg style="left:526px;top:905px" width="22" height="18" viewBox="0 0 22 18"><path d="M0.3 10.6H7.3L3.8 14.4Z" fill="#333"/><path d="M7 2.4H21L15.6 8.8V16.6H12.4V8.8Z" fill="#666"/></svg>
<div class="fb" style="left:554px;top:903px;width:66px;height:22px"></div>
<div class="t" style="font-size:12.8px;color:#1a1a1a;left:558.00px;top:906.90px;transform:scaleX(1.0385);transform-origin:left center;">性別</div>
<svg style="left:592.5px;top:905px" width="22" height="18" viewBox="0 0 22 18"><path d="M0.3 10.6H7.3L3.8 14.4Z" fill="#333"/><path d="M7 2.4H21L15.6 8.8V16.6H12.4V8.8Z" fill="#666"/></svg>
<div class="fb" style="left:621px;top:903px;width:81px;height:22px"></div>
<div class="t" style="font-size:12.8px;color:#1a1a1a;left:624.50px;top:906.90px;transform:scaleX(1.0192);transform-origin:left center;">年齢階級</div>
<svg style="left:686px;top:911px" width="10" height="6"><path d="M0.5 0.5H9.5L5 5.5Z" fill="#333"/></svg>
<div class="fb" style="left:1389px;top:903px;width:19px;height:22px"></div>
<div class="fb" style="left:1409px;top:903px;width:19px;height:22px"></div>
<svg style="left:1392px;top:908px" width="12" height="12" fill="none" stroke="#6a6a6a" stroke-width="1.6"><path d="M6 1.5V10.5M1.5 6H10.5"/></svg>
<svg style="left:1412px;top:908px" width="12" height="12" fill="none" stroke="#6a6a6a" stroke-width="1.6"><path d="M1.5 6H10.5"/></svg>
<div class="fb" style="left:1117px;top:430px;width:313px;height:22px"></div>
<div class="t" style="font-size:13.5px;color:#111;left:1121.00px;top:433.75px;transform:scaleX(0.9631);transform-origin:left center;">肥満度（BMI）・腹囲</div>
<svg style="left:1414px;top:438px" width="10" height="6"><path d="M0.5 0.5H9.5L5 5.5Z" fill="#222"/></svg>
<div style="left:1123px;top:462px;width:10px;height:10px;background:linear-gradient(#a0cff6,#72b5e9);border:1px solid #1c9ad8"></div>
<div class="t" style="font-size:14px;color:#7f7f7f;left:1136.00px;top:460.00px;transform:scaleX(1.0669);transform-origin:left center;">腹囲のみ超（腹囲≧85ｃｍ（男）/90cm</div>
<div class="t" style="font-size:14px;color:#7f7f7f;left:1137.00px;top:484.00px;transform:scaleX(1.0179);transform-origin:left center;">（女））</div>
<div style="left:1123px;top:509px;width:10px;height:10px;background:linear-gradient(#9fb59f,#6c8c6c);border:1px solid #1e6b2a"></div>
<div class="t" style="font-size:14px;color:#7f7f7f;left:1135.00px;top:506.00px;transform:scaleX(1.0700);transform-origin:left center;">ＢＭＩのみ超（ＢＭＩ≧25）</div>
<div style="left:1123px;top:555px;width:10px;height:10px;background:linear-gradient(#f6bba8,#f29c7d);border:1px solid #e97132"></div>
<div class="t" style="font-size:14px;color:#7f7f7f;left:1136.00px;top:552.00px;transform:scaleX(1.0486);transform-origin:left center;">BMI≧25、腹囲≧85ｃｍ（男）/90cm（女）</div>
<div style="left:1123px;top:601px;width:10px;height:10px;background:linear-gradient(#9eb0bf,#7892ab);border:1px solid #1f5f82"></div>
<div class="t" style="font-size:14px;color:#7f7f7f;left:1136.00px;top:598.00px;transform:scaleX(1.0338);transform-origin:left center;">BMI＜25、腹囲＜85ｃｍ（男）/90cm（女）</div>
<svg style="left:439px;top:124px" width="16" height="16"><circle cx="8" cy="8" r="5.9" fill="#fff" stroke="#5a5a5a" stroke-width="2.1"/></svg>
<svg style="left:937.2px;top:124px" width="16" height="16"><circle cx="8" cy="8" r="5.9" fill="#fff" stroke="#5a5a5a" stroke-width="2.1"/></svg>
<svg style="left:1436px;top:124px" width="16" height="16"><circle cx="8" cy="8" r="5.9" fill="#fff" stroke="#5a5a5a" stroke-width="2.1"/></svg>
<svg style="left:439px;top:527px" width="16" height="16"><circle cx="8" cy="8" r="5.9" fill="#fff" stroke="#5a5a5a" stroke-width="2.1"/></svg>
<svg style="left:1436px;top:527px" width="16" height="16"><circle cx="8" cy="8" r="5.9" fill="#fff" stroke="#5a5a5a" stroke-width="2.1"/></svg>
<svg style="left:439px;top:930px" width="16" height="16"><circle cx="8" cy="8" r="5.9" fill="#fff" stroke="#5a5a5a" stroke-width="2.1"/></svg>
<svg style="left:937.2px;top:930px" width="16" height="16"><circle cx="8" cy="8" r="5.9" fill="#fff" stroke="#5a5a5a" stroke-width="2.1"/></svg>
<svg style="left:1436px;top:930px" width="16" height="16"><circle cx="8" cy="8" r="5.9" fill="#fff" stroke="#5a5a5a" stroke-width="2.1"/></svg>
<div style="left:1456px;top:98px;width:26px;height:855px;background:#e0e6ee"></div>
<div style="left:0;top:953px;width:1482px;height:40px;background:#e4e8ef"></div>
<svg style="left:30px;top:964px" width="12" height="16" fill="none" stroke="#a9a9a9" stroke-width="1.5"><path d="M8.5 2L2.5 8L8.5 14"/></svg>
<svg style="left:70px;top:964px" width="12" height="16" fill="none" stroke="#a9a9a9" stroke-width="1.5"><path d="M3.5 2L9.5 8L3.5 14"/></svg>
<div class="t" style="font-size:20px;color:#222;left:152.00px;top:964.00px;transform:scaleX(0.9579);transform-origin:left center;">data</div>
<div style="left:207px;top:962px;width:1px;height:22px;background:#c3c7cd"></div>
<div style="left:213px;top:953px;width:66px;height:35px;border-radius:0 0 5px 5px;background:#fff"></div>
<svg style="left:208px;top:953px" width="5" height="5"><path d="M0 0H5V5A5 5 0 0 0 0 0Z" fill="#fff"/></svg>
<svg style="left:279px;top:953px" width="5" height="5"><path d="M5 0H0V5A5 5 0 0 1 5 0Z" fill="#fff"/></svg>
<div class="t" style="font-size:20px;color:#222;left:225.70px;top:959.60px;transform:scaleX(0.9751);transform-origin:left center;">pivot</div>
<div style="left:223px;top:983px;width:46px;height:2px;background:#107c41"></div>
<div style="left:284px;top:962px;width:1px;height:22px;background:#c3c7cd"></div>
<svg style="left:336px;top:964px" width="16" height="16" fill="none" stroke="#333" stroke-width="1.6"><path d="M8 1V15M1 8H15"/></svg>
<svg style="left:892px;top:966.0px" width="5" height="5"><rect x="0.8" y="1" width="2.7" height="2.4" fill="#2e2e2e"/></svg>
<svg style="left:892px;top:971.5px" width="5" height="5"><rect x="0.8" y="1" width="2.7" height="2.4" fill="#2e2e2e"/></svg>
<svg style="left:892px;top:977.0px" width="5" height="5"><rect x="0.8" y="1" width="2.7" height="2.4" fill="#2e2e2e"/></svg>
<div style="left:914px;top:962px;width:545px;height:21px;border-radius:10.5px;background:#f3f3f3"></div>
<svg style="left:919.5px;top:966.6px" width="9" height="12"><path d="M8.2 0.8L1 6L8.2 11.2Z" fill="#6e6e6e" stroke="#6e6e6e" stroke-linejoin="round"/></svg>
<svg style="left:1444px;top:966.6px" width="9" height="12"><path d="M0.8 0.8L8 6L0.8 11.2Z" fill="#6e6e6e" stroke="#6e6e6e" stroke-linejoin="round"/></svg>
<div style="left:935px;top:967px;width:447px;height:11px;border-radius:5.5px;background:#717171"></div>
<div style="left:1459px;top:99px;width:20.6px;height:857px;border-radius:10.3px;background:#f3f3f3"></div>
<div style="left:1464px;top:119px;width:11px;height:491px;border-radius:5.5px;background:#717171"></div>
<svg style="left:1464px;top:103px" width="12" height="9"><path d="M0.8 8.2L6 1L11.2 8.2Z" fill="#6e6e6e" stroke="#6e6e6e" stroke-linejoin="round" stroke-width="1"/></svg>
<svg style="left:1464px;top:941.6px" width="12" height="9"><path d="M0.8 0.8L6 8L11.2 0.8Z" fill="#6e6e6e" stroke="#6e6e6e" stroke-linejoin="round" stroke-width="1"/></svg>
<div style="left:1482px;top:98px;width:438px;height:895px;background:#f0f0f0;border-left:1px solid #b4b4b4"></div>
<div style="left:1482px;top:98px;width:438px;height:3px;background:linear-gradient(#d6d8dc,rgba(232,232,232,0))"></div>
<div style="left:0;top:992px;width:1920px;height:2px;background:linear-gradient(#dadce0 50%,#c3c3c3 50%)"></div>
<div class="t" style="font-size:17px;color:#222;font-weight:bold;left:1496.40px;top:116.50px;transform:scaleX(0.8394);transform-origin:left center;">ピボットグラフのフィールド</div>
<svg style="left:1841px;top:118px" width="22" height="14" fill="none" stroke="#333" stroke-width="1.4"><path d="M2.5 3L11 11.5L19.5 3"/></svg>
<svg style="left:1884px;top:117px" width="16" height="16" fill="none" stroke="#333" stroke-width="1.4"><path d="M1.5 1.5L14.5 14.5M14.5 1.5L1.5 14.5"/></svg>
<div class="t" style="font-size:14.5px;color:#222;font-weight:bold;left:1499.00px;top:153.75px;transform:scaleX(0.8000);transform-origin:left center;">アクティブ</div>
<div class="t" style="font-size:14.5px;color:#333;left:1588.00px;top:153.75px;transform:scaleX(0.8000);transform-origin:left center;">すべて</div>
<div style="left:1498px;top:179px;width:62px;height:3px;background:#107c41"></div>
<div class="t" style="font-size:14.5px;color:#333;left:1499.00px;top:197.75px;transform:scaleX(0.7908);transform-origin:left center;">レポートに追加するフィールドを選択してください:</div>
<div style="left:1848px;top:187px;width:57px;height:35px;background:#fff;border:1px solid #8a8a8a"></div>
<svg style="left:1857.9px;top:192.3px" width="24" height="24" viewBox="0 0 24 24" fill="none" stroke="#3a3a3a" stroke-width="1.4" stroke-linejoin="round"><circle cx="12" cy="12" r="3.2"/><path d="M21.3 12.0L21.3 12.4L21.3 12.8L21.2 13.2L20.9 13.6L20.5 13.9L19.7 14.1L19.0 14.2L18.5 14.4L18.3 14.6L18.1 14.8L17.9 15.1L17.8 15.3L17.6 15.6L17.5 15.8L17.4 16.1L17.3 16.4L17.4 16.9L17.7 17.7L17.9 18.4L17.8 19.0L17.6 19.3L17.3 19.6L17.0 19.9L16.7 20.1L16.3 20.3L15.9 20.4L15.5 20.5L15.1 20.5L14.6 20.3L14.1 19.7L13.6 19.1L13.2 18.8L12.9 18.7L12.6 18.7L12.3 18.7L12.0 18.7L11.7 18.7L11.4 18.7L11.1 18.7L10.8 18.8L10.4 19.1L9.9 19.7L9.4 20.3L8.9 20.5L8.5 20.5L8.1 20.4L7.7 20.3L7.3 20.1L7.0 19.9L6.7 19.6L6.4 19.3L6.2 19.0L6.1 18.4L6.3 17.7L6.6 16.9L6.7 16.4L6.6 16.1L6.5 15.8L6.4 15.6L6.2 15.3L6.1 15.1L5.9 14.8L5.7 14.6L5.5 14.4L5.0 14.2L4.3 14.1L3.5 13.9L3.1 13.6L2.8 13.2L2.7 12.8L2.7 12.4L2.7 12.0L2.7 11.6L2.7 11.2L2.8 10.8L3.1 10.4L3.5 10.1L4.3 9.9L5.0 9.8L5.5 9.6L5.7 9.4L5.9 9.2L6.1 8.9L6.2 8.7L6.4 8.4L6.5 8.2L6.6 7.9L6.7 7.6L6.6 7.1L6.3 6.3L6.1 5.6L6.2 5.0L6.4 4.7L6.7 4.4L7.0 4.1L7.3 3.9L7.7 3.7L8.1 3.6L8.5 3.5L8.9 3.5L9.4 3.7L9.9 4.3L10.4 4.9L10.8 5.2L11.1 5.3L11.4 5.3L11.7 5.3L12.0 5.3L12.3 5.3L12.6 5.3L12.9 5.3L13.2 5.2L13.6 4.9L14.1 4.3L14.6 3.7L15.1 3.5L15.5 3.5L15.9 3.6L16.3 3.7L16.7 3.9L17.0 4.1L17.3 4.4L17.6 4.7L17.8 5.0L17.9 5.6L17.7 6.3L17.4 7.1L17.3 7.6L17.4 7.9L17.5 8.2L17.6 8.4L17.8 8.7L17.9 8.9L18.1 9.2L18.3 9.4L18.5 9.6L19.0 9.8L19.7 9.9L20.5 10.1L20.9 10.4L21.2 10.8L21.3 11.2L21.3 11.6Z"/></svg>
<svg style="left:1888.6px;top:200.4px" width="10" height="8" fill="none" stroke="#333" stroke-width="1.3"><path d="M1.5 2L5 5.5L8.5 2"/></svg>
<div style="left:1498px;top:239px;width:407px;height:30px;background:#fff;border:1px solid #8a8a8a"></div>
<div class="t" style="font-size:14.5px;color:#8a8a8a;left:1506.00px;top:245.75px;transform:scaleX(0.9667);transform-origin:left center;">検索</div>
<svg style="left:1879px;top:243px" width="22" height="22" viewBox="0 0 22 22" fill="none" stroke="#333" stroke-width="1.3"><circle cx="13.4" cy="8.2" r="5.8"/><path d="M9.2 12.4L1.6 20"/></svg>
<div style="left:1498px;top:291px;width:407px;height:252px;background:#fff;border:1px solid #8a8a8a"></div>
<div style="left:1522px;top:291px;width:20px;height:2px;background:#333"></div>
<div class="cb" style="left:1546px;top:296px;width:16px;height:16px"></div>
<div class="t" style="font-size:14.5px;color:#262626;left:1569.30px;top:300.75px;">日付</div>
<div class="cbk" style="left:1546px;top:327px;width:16px;height:16px"></div>
<svg style="left:1546px;top:327px" width="16" height="16" fill="none" stroke="#fff" stroke-width="1.5"><path d="M3.6 8.2L6.6 11.2L12.4 5"/></svg>
<div class="t" style="font-size:14.5px;color:#1a1a1a;font-weight:bold;left:1569.30px;top:331.75px;transform:scaleX(0.9833);transform-origin:left center;">性別</div>
<svg style="left:1862px;top:329px" width="18" height="18" viewBox="0 0 18 18" fill="none" stroke="#444" stroke-width="1.3"><path d="M1.6 1.8H16.4L10.6 8.6V15.4H7.4V8.6Z" stroke-linejoin="round"/></svg>
<div class="cbk" style="left:1546px;top:358px;width:16px;height:16px"></div>
<svg style="left:1546px;top:358px" width="16" height="16" fill="none" stroke="#fff" stroke-width="1.5"><path d="M3.6 8.2L6.6 11.2L12.4 5"/></svg>
<div class="t" style="font-size:14.5px;color:#1a1a1a;font-weight:bold;left:1569.30px;top:362.75px;transform:scaleX(1.0083);transform-origin:left center;">年齢階級</div>
<div class="cbk" style="left:1546px;top:389px;width:16px;height:16px"></div>
<svg style="left:1546px;top:389px" width="16" height="16" fill="none" stroke="#fff" stroke-width="1.5"><path d="M3.6 8.2L6.6 11.2L12.4 5"/></svg>
<div class="t" style="font-size:14.5px;color:#1a1a1a;font-weight:bold;left:1569.30px;top:393.75px;transform:scaleX(1.0531);transform-origin:left center;">肥満度（BMI）･腹囲</div>
<div class="cbk" style="left:1546px;top:420px;width:16px;height:16px"></div>
<svg style="left:1546px;top:420px" width="16" height="16" fill="none" stroke="#fff" stroke-width="1.5"><path d="M3.6 8.2L6.6 11.2L12.4 5"/></svg>
<div class="t" style="font-size:14.5px;color:#1a1a1a;font-weight:bold;left:1569.30px;top:424.75px;transform:scaleX(1.1574);transform-origin:left center;">割合 (%)</div>
<div class="cbk" style="left:1546px;top:451px;width:16px;height:16px"></div>
<svg style="left:1546px;top:451px" width="16" height="16" fill="none" stroke="#fff" stroke-width="1.5"><path d="M3.6 8.2L6.6 11.2L12.4 5"/></svg>
<div class="t" style="font-size:14.5px;color:#1a1a1a;font-weight:bold;left:1569.30px;top:455.75px;transform:scaleX(1.0905);transform-origin:left center;">日付 (年)</div>
<svg style="left:1862px;top:453px" width="18" height="18" viewBox="0 0 18 18" fill="none" stroke="#444" stroke-width="1.3"><path d="M1.6 1.8H16.4L10.6 8.6V15.4H7.4V8.6Z" stroke-linejoin="round"/></svg>
<div class="cb" style="left:1546px;top:482px;width:16px;height:16px"></div>
<div class="t" style="font-size:14.5px;color:#262626;left:1569.30px;top:486.75px;transform:scaleX(1.0599);transform-origin:left center;">日付 (四半期)</div>
<div class="cb" style="left:1546px;top:513px;width:16px;height:16px"></div>
<div class="t" style="font-size:14.5px;color:#262626;left:1569.30px;top:517.75px;transform:scaleX(1.0905);transform-origin:left center;">日付 (月)</div>
<div style="left:1883px;top:292px;width:21px;height:250px;background:#f1f1f1"></div>
<svg style="left:1888px;top:298px" width="12" height="9"><path d="M0.8 8.2L6 1L11.2 8.2Z" fill="#6e6e6e" stroke="#6e6e6e" stroke-linejoin="round"/></svg>
<svg style="left:1888px;top:527px" width="12" height="9"><path d="M0.8 0.8L6 8L11.2 0.8Z" fill="#6e6e6e" stroke="#6e6e6e" stroke-linejoin="round"/></svg>
<div style="left:1888px;top:328px;width:11px;height:185px;background:#7a7a7a"></div>
<div style="left:1500px;top:562px;width:408px;height:0;border-top:1px dotted #c3c3c3"></div>
<div class="t" style="font-size:14.5px;color:#333;left:1503.00px;top:569.75px;transform:scaleX(0.7472);transform-origin:left center;">次のボックス間でフィールドをドラッグしてください:</div>
<svg style="left:1506px;top:611px" width="16" height="16" viewBox="0 0 16 16"><path d="M0.8 0.8H15.2L9.6 7.4V14.6H6.4V7.4Z" fill="#8e8e8e"/></svg>
<div class="t" style="font-size:14.5px;color:#333;left:1529.00px;top:612.25px;transform:scaleX(0.6933);transform-origin:left center;">フィルター</div>
<div style="left:1713px;top:612px;width:4px;height:11px;background:#8e8e8e"></div>
<div style="left:1718px;top:612px;width:1px;height:11px;background:#a8a8a8"></div>
<div style="left:1720px;top:612px;width:1px;height:11px;background:#a8a8a8"></div>
<div style="left:1722px;top:612px;width:1px;height:11px;background:#a8a8a8"></div>
<div class="t" style="font-size:14.5px;color:#333;left:1733.00px;top:612.25px;transform:scaleX(1.0857);transform-origin:left center;">凡例 (系列)</div>
<div class="wbox" style="left:1502px;top:634px;width:194px;height:125px"></div>
<div class="wbox" style="left:1706px;top:634px;width:200px;height:125px"></div>
<div style="left:1703px;top:608px;width:1px;height:151px;background:#c6c6c6"></div>
<div style="left:1703px;top:767px;width:1px;height:158px;background:#c6c6c6"></div>
<div style="left:1502px;top:766px;width:404px;height:1px;background:#c6c6c6"></div>
<div class="dd" style="left:1707px;top:636px;width:198px;height:27px"></div>
<div class="t" style="font-size:14.5px;color:#222;left:1717.00px;top:642.75px;transform:scaleX(1.0160);transform-origin:left center;">肥満度（BMI）･腹囲</div>
<svg style="left:1885.5px;top:646px" width="10" height="8" fill="none" stroke="#333" stroke-width="1.3"><path d="M1.5 1.8L5 5.3L8.5 1.8"/></svg>
<div style="left:1508px;top:779px;width:12px;height:3px;background:#8e8e8e"></div>
<div style="left:1508px;top:783.5px;width:12px;height:1px;background:#a8a8a8"></div>
<div style="left:1508px;top:786.0px;width:12px;height:1px;background:#a8a8a8"></div>
<div style="left:1508px;top:788.5px;width:12px;height:1px;background:#a8a8a8"></div>
<div class="t" style="font-size:14.5px;color:#333;left:1530.00px;top:777.75px;transform:scaleX(1.0599);transform-origin:left center;">軸 (分類項目)</div>
<div class="t" style="font-size:20px;color:#8e8e8e;font-family:'Liberation Serif',serif;left:1711.00px;top:774.00px;">Σ</div>
<div class="t" style="font-size:14.5px;color:#333;left:1734.00px;top:777.75px;">値</div>
<div class="wbox" style="left:1502px;top:800px;width:194px;height:125px"></div>
<div class="wbox" style="left:1706px;top:800px;width:200px;height:125px"></div>
<div class="dd" style="left:1503px;top:802px;width:192px;height:27px"></div>
<div class="t" style="font-size:14.5px;color:#222;left:1513.00px;top:808.75px;transform:scaleX(1.0905);transform-origin:left center;">日付 (年)</div>
<svg style="left:1675.5px;top:812px" width="10" height="8" fill="none" stroke="#333" stroke-width="1.3"><path d="M1.5 1.8L5 5.3L8.5 1.8"/></svg>
<div class="dd" style="left:1503px;top:831px;width:192px;height:27px"></div>
<div class="t" style="font-size:14.5px;color:#222;left:1513.00px;top:837.75px;transform:scaleX(0.9667);transform-origin:left center;">性別</div>
<svg style="left:1675.5px;top:841px" width="10" height="8" fill="none" stroke="#333" stroke-width="1.3"><path d="M1.5 1.8L5 5.3L8.5 1.8"/></svg>
<div class="dd" style="left:1503px;top:860px;width:192px;height:27px"></div>
<div class="t" style="font-size:14.5px;color:#222;left:1513.00px;top:866.75px;">年齢階級</div>
<svg style="left:1675.5px;top:870px" width="10" height="8" fill="none" stroke="#333" stroke-width="1.3"><path d="M1.5 1.8L5 5.3L8.5 1.8"/></svg>
<div class="dd" style="left:1707px;top:802px;width:198px;height:27px"></div>
<div class="t" style="font-size:14.5px;color:#222;left:1717.00px;top:808.75px;transform:scaleX(1.1249);transform-origin:left center;">合計 / 割合 (%)</div>
<svg style="left:1885.5px;top:812px" width="10" height="8" fill="none" stroke="#333" stroke-width="1.3"><path d="M1.5 1.8L5 5.3L8.5 1.8"/></svg>
<div style="left:1506px;top:958px;width:16px;height:16px;background:#fff;border:1px solid #6e6e6e;border-radius:2.5px"></div>
<div class="t" style="font-size:14.5px;color:#222;left:1530.00px;top:958.75px;transform:scaleX(0.8308);transform-origin:left center;">レイアウトの更新を保留する</div>
<div style="left:1862px;top:950px;width:44px;height:31px;border:1px solid #dadada;background:#efefef"></div>
<div class="t" style="font-size:14.5px;color:#b4b4b4;left:1870.00px;top:958.75px;transform:scaleX(0.9333);transform-origin:left center;">更新</div>
</body></html>
